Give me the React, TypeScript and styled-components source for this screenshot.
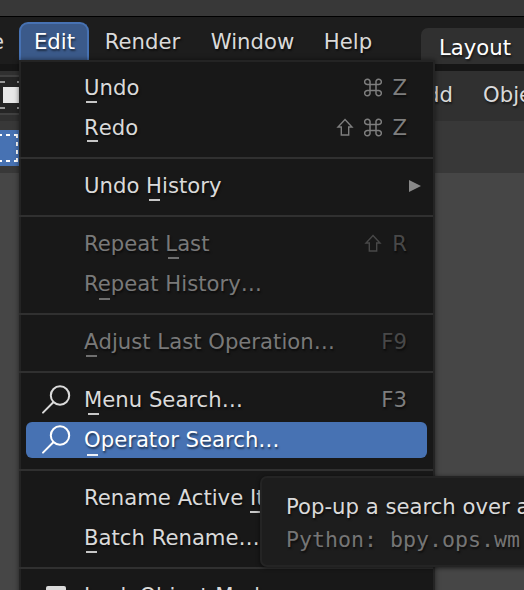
import React from "react";
import styled, { createGlobalStyle, css } from "styled-components";

const Global = createGlobalStyle`
  * { box-sizing: border-box; }
  body { margin: 0; overflow: hidden; background: #464646; }
`;

const Screen = styled.div`
  position: relative;
  width: 524px;
  height: 590px;
  overflow: hidden;
  display: flex;
  flex-direction: column;
  background: #464646;
  color: #dadada;
  font: 21.2px/26px "DejaVu Sans", sans-serif;
  white-space: nowrap;
`;

const TitleBar = styled.div`
  flex: none;
  height: 17px;
  background: #383838;
  border-bottom: 1px solid #000;
`;

const TopBar = styled.div`
  flex: none;
  display: flex;
  height: 54px;
  background: #1d1d1d;
  border-bottom: 7px solid #161616;
  overflow: hidden;
`;

const MenuTitle = styled.div<{ $w: number; $active?: boolean }>`
  flex: none;
  width: ${(p) => p.$w}px;
  height: 38px;
  margin-top: 5px;
  padding-left: 1px;
  display: flex;
  align-items: center;
  justify-content: center;
  text-shadow: 1px 2px 2px #0008;
  border: 2px solid transparent;
  border-bottom: 0;
  ${(p) =>
    p.$active &&
    css`
      color: #fff;
      background: #3b5a8a;
      border-color: #4772b3;
      border-radius: 9px 9px 0 0;
    `}
`;

const ClippedTitle = styled.div`
  flex: none;
  display: flex;
  justify-content: flex-end;
  width: 19px;
  padding: 12px 15px 0 0;
`;

const WorkspaceTab = styled.div`
  flex: none;
  width: 140px;
  height: 36px;
  margin: 11px 0 0 35px;
  padding: 7px 18px 0;
  color: #fff;
  background: #303030;
  border-radius: 7px 0 0 0;
  text-shadow: 1px 2px 2px #0008;
`;

const Header = styled.div`
  flex: none;
  display: flex;
  height: 50px;
  background: #303030;
`;

const ModeIcon = styled.svg`
  display: block;
  flex: none;
`;

const HeaderItem = styled.div<{ $gap: number }>`
  flex: none;
  margin-left: ${(p) => p.$gap}px;
  padding-top: 11px;
  text-shadow: 1px 2px 2px #0008;
`;

const ToolBar = styled.div`
  flex: none;
  height: 52px;
  background: #383838;
`;

const Menu = styled.div`
  position: absolute;
  left: 19px;
  top: 60px;
  width: 416px;
  height: 580px;
  padding-top: 5px;
  display: flex;
  flex-direction: column;
  background: #181818;
  border: 2px solid #242424;
  box-shadow: 0 0 5px #0008;
`;

const Row = styled.div<{ $state?: "active" | "disabled" }>`
  flex: none;
  height: 36px;
  margin: 3px 6px 1px 5px;
  padding: 0 20px 0 14px;
  display: flex;
  align-items: center;
  border-radius: 6px;
  text-shadow: 1px 2px 2px #0008;
  color: ${(p) => (p.$state === "active" ? "#fff" : p.$state === "disabled" ? "#797979" : "#dadada")};
  background: ${(p) => (p.$state === "active" ? "#4772b3" : "transparent")};
`;

const IconSlot = styled.span`
  flex: none;
  width: 44px;
  height: 36px;
`;

const Label = styled.span`
  flex: 1;
`;

const Key = styled.span`
  position: relative;
`;

const Mark = styled.span<{ $dx: number; $dy: number }>`
  position: absolute;
  left: ${(p) => p.$dx}px;
  top: ${(p) => 26 + p.$dy}px;
  width: 11px;
  height: 2px;
  background: currentColor;
  opacity: 0.9;
`;

const Shortcut = styled.span<{ $dim?: boolean }>`
  display: flex;
  align-items: center;
  gap: 10px;
  color: ${(p) => (p.$dim ? "#484848" : "#7e7e7e")};
`;

const Arrow = styled.svg`
  flex: none;
  margin-right: -15px;
`;

const Separator = styled.div`
  flex: none;
  height: 2px;
  margin: 10px 0 6px -2px;
  background: #303030;
`;

const Tooltip = styled.div`
  position: absolute;
  left: 260px;
  top: 476px;
  width: 300px;
  height: 91px;
  padding: 16px 0 0 24px;
  background: #1d1d1d;
  border: 2px solid #242424;
  border-radius: 7px;
  box-shadow: 0 1px 4px #0009;
  text-shadow: 1px 2px 2px #0008;
`;

const Python = styled.div`
  margin-top: 7px;
  color: #757575;
  font-family: "DejaVu Sans Mono", monospace;
  font-size: 21.6px;
`;

const SearchIcon = () => (
  <svg width="44" height="36" fill="none" stroke="currentColor" strokeWidth="2" strokeLinecap="round">
    <circle cx="20" cy="13.5" r="9.2" />
    <path d="M13.3 20.2L3 30.6" />
  </svg>
);

const CheckBox = () => (
  <svg width="44" height="36">
    <rect x="6" y="8" width="20" height="20" rx="2" fill="#dadada" />
  </svg>
);

const Shift = () => (
  <svg width="18" height="20" fill="none" stroke="currentColor" strokeWidth="1.4">
    <path d="M9 1.5L16 9H12.7V17H5.3V9H2Z" />
  </svg>
);

const Command = () => (
  <svg width="18" height="20" fill="none" stroke="currentColor" strokeWidth="1.5">
    <path d="M6 6.5H12V12.5H6ZM6 6.5H3.8A2.7 2.7 0 1 1 6 4.3ZM12 6.5V4.3A2.7 2.7 0 1 1 14.2 6.5ZM12 12.5H14.2A2.7 2.7 0 1 1 12 14.7ZM6 12.5V14.7A2.7 2.7 0 1 1 3.8 12.5Z" />
  </svg>
);

type ItemProps = {
  text: string;
  at?: number;
  dx?: number;
  dy?: number;
  state?: "active" | "disabled";
  icon?: React.ReactNode;
  children?: React.ReactNode;
};

const Item = ({ text, at = 0, dx = 2, dy = 0, state, icon, children }: ItemProps) => (
  <Row $state={state}>
    <IconSlot>{icon}</IconSlot>
    <Label>
      {text.slice(0, at)}
      <Key>
        {text[at]}
        <Mark $dx={dx} $dy={dy} />
      </Key>
      {text.slice(at + 1)}
    </Label>
    {children}
  </Row>
);

export default function App() {
  return (
    <Screen>
      <Global />
      <TitleBar />
      <TopBar>
        <ClippedTitle>File</ClippedTitle>
        <MenuTitle $w={70} $active>Edit</MenuTitle>
        <MenuTitle $w={106}>Render</MenuTitle>
        <MenuTitle $w={114}>Window</MenuTitle>
        <MenuTitle $w={77}>Help</MenuTitle>
        <WorkspaceTab>Layout</WorkspaceTab>
      </TopBar>
      <Header>
        <ModeIcon width="24" height="50">
          <rect y="5" width="24" height="38" fill="#252525" />
          <path d="M0 5H24M0 43H24" stroke="#404040" strokeWidth="2" />
          <path d="M0 11H5M17 11H24M0 37H5M17 37H24" stroke="#999" strokeWidth="2" />
          <rect x="3" y="16" width="16" height="16" fill="#e8e8e8" />
        </ModeIcon>
        <HeaderItem $gap={388}>Add</HeaderItem>
        <HeaderItem $gap={30}>Object</HeaderItem>
      </Header>
      <ToolBar>
        <ModeIcon width="24" height="52">
          <rect y="9" width="24" height="36" fill="#4772b3" />
          <path d="M0 14H18M0 40H18" stroke="#fff" strokeWidth="2" strokeDasharray="4 4" strokeDashoffset="2" />
          <path d="M17 13V41" stroke="#fff" strokeWidth="2" strokeDasharray="4 4" />
        </ModeIcon>
      </ToolBar>
      <Menu>
        <Item text="Undo"><Shortcut><Command />Z</Shortcut></Item>
        <Item text="Redo" dx={3} dy={-1}><Shortcut><Shift /><Command />Z</Shortcut></Item>
        <Separator />
        <Item text="Undo History" at={5} dx={3}>
          <Arrow width="14" height="14"><path d="M1 1L13 7L1 13Z" fill="#888" /></Arrow>
        </Item>
        <Separator />
        <Item text="Repeat Last" at={7} dx={3} state="disabled"><Shortcut $dim><Shift />R</Shortcut></Item>
        <Item text="Repeat History…" at={1} dx={1} dy={1} state="disabled" />
        <Separator />
        <Item text="Adjust Last Operation…" state="disabled"><Shortcut $dim>F9</Shortcut></Item>
        <Separator />
        <Item text="Menu Search…" dx={4} icon={<SearchIcon />}><Shortcut>F3</Shortcut></Item>
        <Item text="Operator Search…" dx={3} dy={1} state="active" icon={<SearchIcon />} />
        <Separator />
        <Item text="Rename Active Item…" at={14} dx={0} />
        <Item text="Batch Rename…" />
        <Separator />
        <Item text="Lock Object Modes" icon={<CheckBox />} />
      </Menu>
      <Tooltip>
        Pop-up a search over all available operators
        <Python>Python: bpy.ops.wm.search_operator()</Python>
      </Tooltip>
    </Screen>
  );
}
